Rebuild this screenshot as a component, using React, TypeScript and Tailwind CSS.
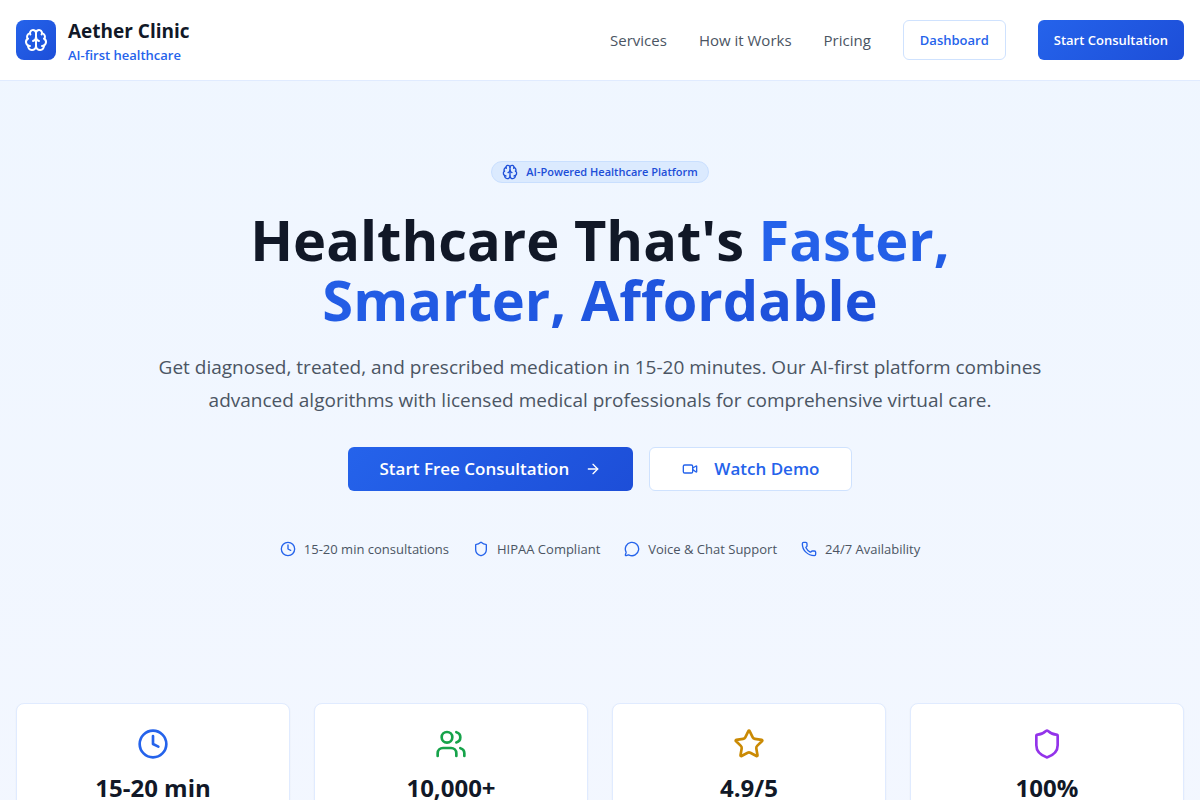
import { ArrowRight, Brain, Clock, MessageCircle, Phone, Shield, Star, Users, Video } from "lucide-react";

const features = [
  { Icon: Clock, label: "15-20 min consultations" },
  { Icon: Shield, label: "HIPAA Compliant" },
  { Icon: MessageCircle, label: "Voice & Chat Support" },
  { Icon: Phone, label: "24/7 Availability" },
];

const stats = [
  { Icon: Clock, value: "15-20 min", color: "text-[#2563eb]" },
  { Icon: Users, value: "10,000+", color: "text-[#16a34a]" },
  { Icon: Star, value: "4.9/5", color: "text-[#ca8a04]" },
  { Icon: Shield, value: "100%", color: "text-[#9333ea]" },
];

function Header() {
  return (
    <header className="border-b border-[#e0ebff] bg-white">
      <div className="mx-auto flex h-20 max-w-7xl items-center justify-between px-4">
        <div className="flex items-center gap-3">
          <div className="flex size-10 items-center justify-center rounded-lg bg-linear-135 from-[#2563eb] to-[#1d4ed8]">
            <Brain className="size-6 text-white" />
          </div>
          <div className="pt-0.5">
            <p className="text-[19px] font-bold leading-7 text-[#111827]">Aether Clinic</p>
            <p className="text-[13px] font-semibold leading-5 text-[#2563eb]">AI-first healthcare</p>
          </div>
        </div>
        <nav className="flex items-center gap-8 text-[15px] text-[#4b5563]">
          <a href="#services">Services</a>
          <a href="#how-it-works">How it Works</a>
          <a href="#pricing">Pricing</a>
          <button className="h-10 rounded-md border border-[#cfe2fe] bg-white px-4 pt-0.5 text-[13px] font-semibold text-[#2563eb]">Dashboard</button>
          <button className="h-10 rounded-md bg-linear-135 from-[#2563eb] to-[#1d4ed8] px-4 pt-0.5 text-[13px] font-semibold text-white">Start Consultation</button>
        </nav>
      </div>
    </header>
  );
}

function Hero() {
  return (
    <section className="px-4 py-20">
      <div className="mx-auto flex max-w-4xl flex-col items-center text-center">
        <div className="mb-[26px] flex h-[22px] items-center gap-2 rounded-full border border-[#c9dffe] bg-[#dbeafe] px-2.5 text-[11px] font-semibold text-[#1d4ed8]">
          <Brain className="size-4" />
          AI-Powered Healthcare Platform
        </div>
        <h1 className="mb-[22px] text-[56px] font-bold leading-[60px] text-[#111827]">
          Healthcare That's{" "}
          <span className="bg-linear-135 from-[#2563eb] to-[#1d4ed8] bg-clip-text text-transparent">Faster, Smarter, Affordable</span>
        </h1>
        <p className="mb-[30px] text-[19px] leading-[33px] text-[#4b5563]">
          Get diagnosed, treated, and prescribed medication in 15-20 minutes. Our AI-first platform combines advanced algorithms with licensed medical professionals for comprehensive virtual care.
        </p>
        <div className="mb-12 flex gap-4 text-[17px] font-semibold">
          <button className="flex h-11 items-center gap-4 rounded-md bg-linear-135 from-[#2563eb] to-[#1d4ed8] px-8 text-white">
            Start Free Consultation
            <ArrowRight className="size-4" />
          </button>
          <button className="flex h-11 items-center gap-4 rounded-md border border-[#cfe2fe] bg-white px-8 text-[#2563eb]">
            <Video className="size-4" />
            Watch Demo
          </button>
        </div>
        <ul className="flex justify-center gap-6 text-[13px] leading-5 text-[#4b5563]">
          {features.map(({ Icon, label }) => (
            <li key={label} className="flex items-center gap-2">
              <Icon className="size-4 text-[#2563eb]" />
              {label}
            </li>
          ))}
        </ul>
      </div>
    </section>
  );
}

function Stats() {
  return (
    <section className="px-4 py-16">
      <div className="mx-auto grid max-w-7xl grid-cols-4 gap-6">
        {stats.map(({ Icon, value, color }) => (
          <div key={value} className="flex flex-col items-center rounded-lg border border-[#e0ebff] bg-white p-6 shadow-xs">
            <Icon className={`mb-3 size-8 ${color}`} />
            <p className="text-2xl font-bold text-[#111827]">{value}</p>
          </div>
        ))}
      </div>
    </section>
  );
}

export default function App() {
  return (
    <div className="min-h-screen bg-linear-to-b from-[#eff6ff] to-[#f3f7ff] font-['Open_Sans','Noto_Sans',sans-serif]">
      <Header />
      <main>
        <Hero />
        <Stats />
      </main>
    </div>
  );
}
